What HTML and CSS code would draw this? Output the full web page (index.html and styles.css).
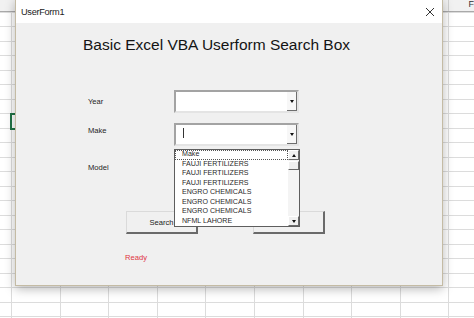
FILE: index.html
```html
<!DOCTYPE html>
<html>
<head>
<meta charset="utf-8">
<link rel="stylesheet" href="styles.css">
</head>
<body>
<div class="sheet">
  <div class="colhead"><span class="colcell">F</span></div>
  <div class="active-cell"></div>
  <div class="dialog">
    <div class="titlebar">
      <span class="title">UserForm1</span>
      <svg class="close" width="10" height="10" viewBox="0 0 10 10"><path d="M1 1 L9 9 M9 1 L1 9" stroke="#333" stroke-width="1" fill="none"/></svg>
    </div>
    <div class="client">
      <h1 class="heading">Basic Excel VBA Userform Search Box</h1>
      <div class="row row-year">
        <span class="lbl">Year</span>
        <div class="combo">
          <div class="field"></div>
          <div class="dd-btn"><i class="arrow-down"></i></div>
        </div>
      </div>
      <div class="row row-make">
        <span class="lbl lbl-top">Make</span>
        <div class="combo-wrap">
          <div class="combo">
            <div class="field"><span class="caret"></span></div>
            <div class="dd-btn"><i class="arrow-down"></i></div>
          </div>
          <div class="list">
            <div class="items">
              <div class="item focus">Make</div>
              <div class="item">FAUJI FERTILIZERS</div>
              <div class="item">FAUJI FERTILIZERS</div>
              <div class="item">FAUJI FERTILIZERS</div>
              <div class="item">ENGRO CHEMICALS</div>
              <div class="item">ENGRO CHEMICALS</div>
              <div class="item">ENGRO CHEMICALS</div>
              <div class="item">NFML LAHORE</div>
            </div>
            <div class="scrollbar">
              <div class="sb-btn"><i class="arrow-up"></i></div>
              <div class="sb-thumb"></div>
              <div class="sb-track"></div>
              <div class="sb-btn"><i class="arrow-down"></i></div>
            </div>
          </div>
        </div>
      </div>
      <div class="row row-model">
        <span class="lbl">Model</span>
      </div>
      <div class="buttons">
        <button class="btn">Search</button>
        <button class="btn"></button>
      </div>
      <div class="status">Ready</div>
    </div>
  </div>
</div>
</body>
</html>
```

FILE: styles.css
```css
html, body {
  margin: 0;
  padding: 0;
}
body {
  width: 474px;
  height: 318px;
  overflow: hidden;
  font-family: "Liberation Sans", Arial, sans-serif;
}
.sheet {
  position: relative;
  width: 474px;
  height: 318px;
  background-color: #ffffff;
  background-image:
    repeating-linear-gradient(to bottom, #dcdcdc 0, #dcdcdc 1px, transparent 1px, transparent 14.5px),
    repeating-linear-gradient(to right, #dcdcdc 0, #dcdcdc 1px, transparent 1px, transparent 48.6px);
  background-position: 0 12px, 11px 0;
  overflow: hidden;
}
.colhead {
  height: 11px;
  background: #f1f1f1;
  border-bottom: 1px solid #a9a9a9;
  display: flex;
  padding-left: 448px;
}
.colcell {
  width: 26px;
  border-left: 1px solid #d0d0d0;
  text-align: right;
  font-size: 9px;
  line-height: 9px;
  color: #333;
  overflow: hidden;
}
.active-cell {
  position: absolute;
  left: 10px;
  top: 113px;
  width: 20px;
  height: 13px;
  border: 2px solid #217346;
}
.dialog {
  position: absolute;
  left: 15px;
  top: -1px;
  width: 428px;
  height: 287px;
  box-sizing: border-box;
  border: 1px solid #c4bba4;
  background: #f0f0f0;
  box-shadow: 0 3px 10px rgba(0, 0, 0, 0.28);
  display: flex;
  flex-direction: column;
}
.titlebar {
  height: 23px;
  background: #ffffff;
  display: flex;
  align-items: center;
  justify-content: space-between;
  padding: 0 7px 0 5px;
  flex: none;
}
.title {
  font-size: 9.2px;
  letter-spacing: -0.3px;
  color: #222;
  padding-top: 1px;
}
.close {
  display: block;
}
.client {
  flex: 1;
  background: #f0f0f0;
  display: flex;
  flex-direction: column;
}
.heading {
  margin: 13px 0 0 67px;
  font-size: 15.5px;
  line-height: 18px;
  font-weight: normal;
  color: #141414;
}
.row {
  display: flex;
  align-items: center;
  margin-left: 72px;
}
.row-year {
  margin-top: 36px;
}
.row-make {
  margin-top: 10px;
  align-items: flex-start;
}
.row-model {
  margin-top: 17px;
}
.lbl {
  width: 86px;
  font-size: 7.6px;
  line-height: 10px;
  color: #1e1e1e;
}
.lbl-top {
  margin-top: 3px;
}
.combo-wrap {
  position: relative;
}
.combo {
  width: 125px;
  height: 23px;
  box-sizing: border-box;
  border-style: solid;
  border-width: 2px;
  border-color: #a3a3a3 #e4e4e4 #e4e4e4 #a3a3a3;
  background: #ffffff;
  display: flex;
}
.field {
  flex: 1;
  position: relative;
}
.caret {
  position: absolute;
  left: 7px;
  top: 3px;
  width: 1px;
  height: 10px;
  background: #333;
}
.dd-btn {
  width: 10px;
  box-sizing: border-box;
  border-right: 1px solid #6e6e6e;
  border-bottom: 1px solid #6e6e6e;
  background: #f7f7f7;
  display: flex;
  align-items: center;
  justify-content: center;
}
.arrow-down {
  display: block;
  width: 0;
  height: 0;
  border-left: 2.5px solid transparent;
  border-right: 2.5px solid transparent;
  border-top: 3px solid #111;
}
.arrow-up {
  display: block;
  width: 0;
  height: 0;
  border-left: 2.5px solid transparent;
  border-right: 2.5px solid transparent;
  border-bottom: 3px solid #111;
}
.list {
  position: absolute;
  left: 0;
  top: 26px;
  width: 126px;
  height: 78px;
  box-sizing: border-box;
  border: 1px solid #5e5e5e;
  background: #ffffff;
  display: flex;
  z-index: 5;
}
.items {
  flex: 1;
  display: flex;
  flex-direction: column;
}
.item {
  height: 9.5px;
  line-height: 9.5px;
  font-size: 7.1px;
  color: #2a2a2a;
  padding-left: 7px;
  box-sizing: border-box;
  white-space: nowrap;
}
.item.focus {
  border: 1px dotted #555;
  line-height: 7.5px;
  padding-left: 6px;
}
.scrollbar {
  width: 11px;
  display: flex;
  flex-direction: column;
  background: #f4f4f4;
}
.sb-btn {
  height: 10px;
  box-sizing: border-box;
  background: #f0f0f0;
  border-style: solid;
  border-width: 1px;
  border-color: #ffffff #6a6a6a #6a6a6a #ffffff;
  display: flex;
  align-items: center;
  justify-content: center;
}
.sb-thumb {
  height: 9px;
  margin-top: 1px;
  box-sizing: border-box;
  background: #f0f0f0;
  border-style: solid;
  border-width: 1px;
  border-color: #ffffff #6a6a6a #6a6a6a #ffffff;
}
.sb-track {
  flex: 1;
}
.buttons {
  display: flex;
  gap: 55px;
  margin: 38px 0 0 110px;
}
.btn {
  width: 72px;
  height: 23px;
  box-sizing: border-box;
  margin: 0;
  padding: 0;
  background: #f0f0f0;
  border-style: solid;
  border-width: 1px 2px 2px 1px;
  border-color: #dadada #6a6a6a #6a6a6a #dadada;
  font-family: "Liberation Sans", Arial, sans-serif;
  font-size: 7.6px;
  color: #222;
}
.status {
  margin: 19px 0 0 109px;
  font-size: 7.6px;
  line-height: 10px;
  color: #e0353f;
}
```
